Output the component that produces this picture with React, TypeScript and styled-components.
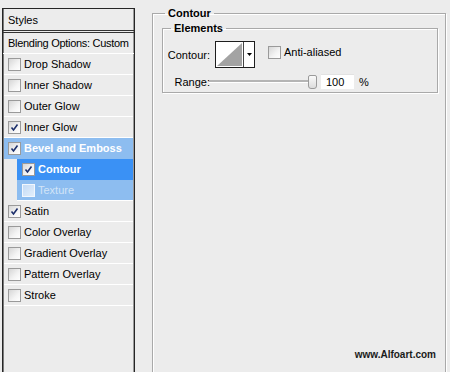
import React from "react";
import styled, { createGlobalStyle, css } from "styled-components";

const Global = createGlobalStyle`
  html, body { margin: 0; padding: 0; background: #ececec; }
  body { font-family: "Liberation Sans", Arial, sans-serif; font-size: 11px; color: #000; }
`;

const Page = styled.div`
  width: 450px;
  height: 372px;
  overflow: hidden;
  display: flex;
  align-items: flex-start;
  padding-left: 2px;
  box-sizing: border-box;
  background: #ececec;
`;

const LeftPanel = styled.div`
  margin-top: 8px;
  width: 133px;
  height: 380px;
  box-sizing: border-box;
  border: 1px solid #262626;
  border-bottom: none;
  box-shadow: inset 1px 0 0 #7a7a7a, inset -1px 0 0 #9a9a9a;
  background: #ececec;
  display: flex;
  flex-direction: column;
  white-space: nowrap;
`;

const HeaderRow = styled.div`
  height: 21px;
  display: flex;
  align-items: center;
  padding-left: 5px;
  border-bottom: 3px double #333;
`;

const BlendRow = styled.div`
  height: 20px;
  display: flex;
  align-items: center;
  padding-left: 5px;
  letter-spacing: -0.3px;
  border-bottom: 1px solid #fff;
`;

type Tone = "none" | "light" | "active" | "dim";

const StyleRow = styled.div<{ $indent?: boolean; $tone: Tone }>`
  height: 20px;
  display: flex;
  align-items: center;
  gap: 3px;
  padding-left: 4px;
  margin-left: 1px;
  margin-right: 1px;
  border-bottom: 1px solid #fff;
  ${(p) =>
    p.$indent &&
    css`
      margin-left: 14px;
      padding-left: 5px;
    `}
  ${(p) =>
    p.$tone === "light" &&
    css`
      background: #8dbdf0;
      color: #fff;
      font-weight: bold;
      border-bottom-color: #8dbdf0;
    `}
  ${(p) =>
    p.$tone === "active" &&
    css`
      background: #3a91f5;
      color: #fff;
      font-weight: bold;
      border-bottom-color: #3a91f5;
    `}
  ${(p) =>
    p.$tone === "dim" &&
    css`
      background: #8dbdf0;
      color: #d2e4f7;
    `}
`;

const Box = styled.span<{ $dim?: boolean }>`
  width: 11px;
  height: 11px;
  flex: none;
  border: 1px solid ${(p) => (p.$dim ? "#f2f7fd" : "#9a9a9a")};
  background: ${(p) =>
    p.$dim
      ? "linear-gradient(135deg, #c4dbf5 0%, #e2eefb 100%)"
      : "linear-gradient(135deg, #d6d6d6 0%, #f4f4f4 60%, #ffffff 100%)"};
  display: flex;
  align-items: center;
  justify-content: center;
`;

const Check = () => (
  <svg width="9" height="9" viewBox="0 0 9 9">
    <path d="M1.5 4.5 L3.5 7 L7.5 1.5" fill="none" stroke="#1c2f6b" strokeWidth="1.6" />
  </svg>
);

const CheckBox = ({ checked, dim }: { checked?: boolean; dim?: boolean }) => (
  <Box $dim={dim}>{checked && <Check />}</Box>
);

const RightCol = styled.div`
  margin-left: 17px;
  margin-top: 7px;
  width: 294px;
  display: flex;
  flex-direction: column;
`;

const Group = styled.fieldset`
  margin: 0;
  padding: 0 7px 0 9px;
  height: 380px;
  box-sizing: border-box;
  border: 1px solid #a9a9a9;
  box-shadow: inset 1px 1px 0 #fff, 1px 1px 0 #fff;
  min-width: 0;
`;

const Legend = styled.legend`
  margin-left: 3px;
  padding: 0 3px;
  font-weight: bold;
  line-height: 13px;
`;

const InnerGroup = styled.fieldset`
  margin: 2px 0 0 0;
  padding: 6px 0 3px 0;
  border: 1px solid #a9a9a9;
  box-shadow: inset 1px 1px 0 #fff, 1px 1px 0 #fff;
  min-width: 0;
`;

const InnerLegend = styled.legend`
  margin-left: 8px;
  padding: 0 3px;
  font-weight: bold;
  line-height: 13px;
`;

const FieldRow = styled.div<{ $gap?: number }>`
  display: flex;
  align-items: center;
  margin-top: ${(p) => p.$gap ?? 0}px;
`;

const Label = styled.span`
  width: 47px;
  text-align: right;
  flex: none;
`;

const Swatch = styled.div`
  margin-left: 5px;
  width: 40px;
  height: 27px;
  box-sizing: border-box;
  border: 1px solid #1e1e1e;
  display: flex;
  background: #fff;
`;

const Curve = styled.div`
  flex: 1;
  border-right: 1px solid #444;
  display: flex;
`;

const Arrow = styled.div`
  width: 11px;
  display: flex;
  align-items: center;
  justify-content: center;
`;

const CheckLabel = styled.label`
  display: flex;
  align-items: center;
  gap: 3px;
  margin-left: 13px;
  margin-top: -5px;
`;

const Slider = styled.div`
  position: relative;
  margin-left: -1px;
  width: 108px;
  height: 14px;
  display: flex;
  align-items: center;
`;

const Track = styled.div`
  flex: 1;
  height: 2px;
  background: #b4b4b4;
  border-bottom: 1px solid #fff;
`;

const Thumb = styled.div`
  position: absolute;
  right: 0;
  top: 0;
  width: 7px;
  height: 12px;
  border: 1px solid #9a9a9a;
  border-radius: 2px 2px 3px 3px;
  background: linear-gradient(#fafafa, #dcdcdc);
`;

const NumInput = styled.div`
  margin-left: 4px;
  width: 33px;
  height: 15px;
  box-sizing: border-box;
  background: #fff;
  border-top: 1px solid #e2e2e2;
  padding-left: 5px;
  display: flex;
  align-items: center;
`;

const Unit = styled.span`
  margin-left: 5px;
`;

const Footer = styled.div`
  margin-top: 256px;
  display: flex;
  justify-content: flex-end;
  padding-right: 2px;
`;

const Watermark = styled.span`
  font-weight: bold;
  font-size: 10px;
  color: #1a1a1a;
`;

const rows: { name: string; checked: boolean; indent?: boolean; tone: Tone }[] = [
  { name: "Drop Shadow", checked: false, tone: "none" },
  { name: "Inner Shadow", checked: false, tone: "none" },
  { name: "Outer Glow", checked: false, tone: "none" },
  { name: "Inner Glow", checked: true, tone: "none" },
  { name: "Bevel and Emboss", checked: true, tone: "light" },
  { name: "Contour", checked: true, indent: true, tone: "active" },
  { name: "Texture", checked: false, indent: true, tone: "dim" },
  { name: "Satin", checked: true, tone: "none" },
  { name: "Color Overlay", checked: false, tone: "none" },
  { name: "Gradient Overlay", checked: false, tone: "none" },
  { name: "Pattern Overlay", checked: false, tone: "none" },
  { name: "Stroke", checked: false, tone: "none" },
];

export default function App() {
  return (
    <>
      <Global />
      <Page>
        <LeftPanel>
          <HeaderRow>Styles</HeaderRow>
          <BlendRow>Blending Options: Custom</BlendRow>
          {rows.map((r) => (
            <StyleRow key={r.name} $indent={r.indent} $tone={r.tone}>
              <CheckBox checked={r.checked} dim={r.tone === "dim"} />
              <span>{r.name}</span>
            </StyleRow>
          ))}
        </LeftPanel>
        <RightCol>
          <Group>
            <Legend>Contour</Legend>
            <InnerGroup>
              <InnerLegend>Elements</InnerLegend>
              <FieldRow>
                <Label>Contour:</Label>
                <Swatch>
                  <Curve>
                    <svg width="27" height="25" viewBox="0 0 27 25">
                      <polygon points="1,24 26,1 26,24" fill="#a3a3a3" />
                    </svg>
                  </Curve>
                  <Arrow>
                    <svg width="5" height="3" viewBox="0 0 5 3">
                      <polygon points="0,0 5,0 2.5,3" fill="#000" />
                    </svg>
                  </Arrow>
                </Swatch>
                <CheckLabel>
                  <CheckBox />
                  <span>Anti-aliased</span>
                </CheckLabel>
              </FieldRow>
              <FieldRow $gap={6}>
                <Label>Range:</Label>
                <Slider>
                  <Track />
                  <Thumb />
                </Slider>
                <NumInput>100</NumInput>
                <Unit>%</Unit>
              </FieldRow>
            </InnerGroup>
            <Footer>
              <Watermark>www.Alfoart.com</Watermark>
            </Footer>
          </Group>
        </RightCol>
      </Page>
    </>
  );
}
